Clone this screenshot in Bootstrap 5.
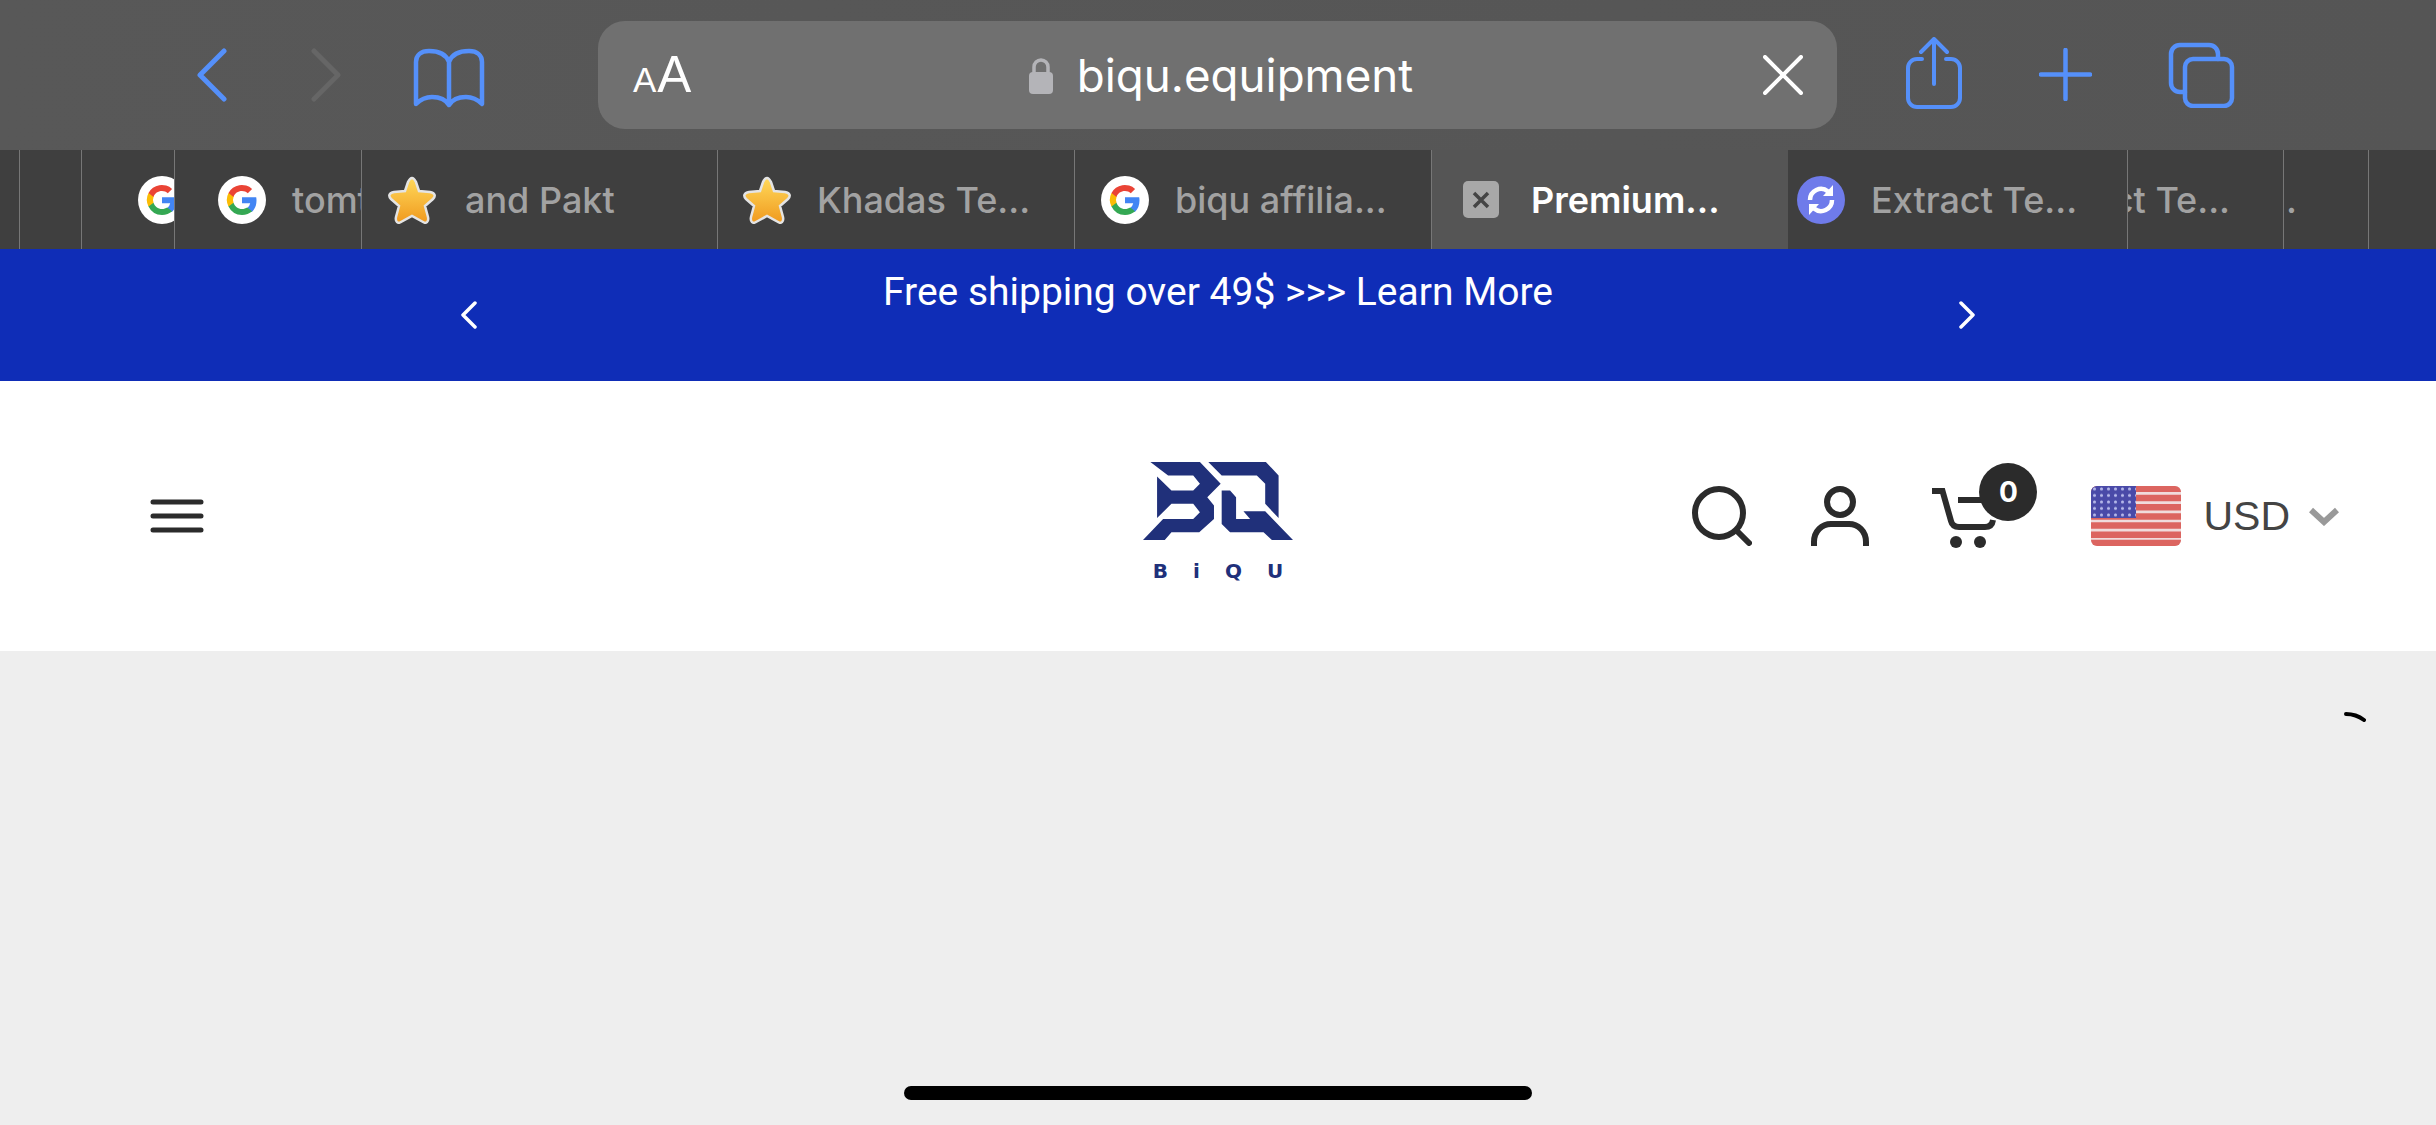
<!DOCTYPE html>
<html lang="en">
<head>
<meta charset="utf-8">
<title>biqu.equipment</title>
<link href="https://cdn.jsdelivr.net/npm/bootstrap@5.3.0/dist/css/bootstrap.min.css" rel="stylesheet">
<style>
body{margin:0;width:2436px;height:1125px;overflow:hidden;background:#eee;font-family:Inter,"Noto Sans",sans-serif;display:flex;flex-direction:column}
.toolbar{height:150px;background:linear-gradient(90deg,#585858,#555);flex:none}
.ico{display:block;flex:none;fill:none;stroke:#5590fa;stroke-linecap:round;stroke-linejoin:round}
.ico-off{stroke:#666;margin-left:84px}
.ico-book{margin-left:71px}
.ico-plus{margin:11px 0 0 77px}
.ico-tabs{margin:5px 0 0 76px}
.url-bar{margin:21px 0 0;width:1239px;height:108px;background:#707070;border-radius:27px;position:relative;color:#fff}
.toolbar-left{padding-top:46px;padding-left:196px;width:598px;flex:none}
.toolbar-left .ico{margin-top:2px}
.aa{font-family:"Liberation Sans",sans-serif;font-weight:400;line-height:1;width:100px;padding-left:35px;padding-top:28px;letter-spacing:1px}
.aa-s{font-size:35px}.aa-b{font-size:51px}
.url-mid{flex:1;justify-content:center;padding-right:19px;padding-top:32px;gap:24px}
.url-lock{margin-top:4px}
.url-text{font-size:45.700px;line-height:1;font-family:Inter,sans-serif;font-weight:400}
.url-x{margin-top:34px;margin-right:34px}
.toolbar-right{padding-left:69px;padding-top:37px}
.tab-strip{height:99px;background:#3f3f3f;flex:none}
.tb{height:99px;overflow:hidden;flex:none;border-right:1px solid #777;color:#a2a2a2;font-size:36px;font-weight:500;white-space:nowrap;align-items:center;font-family:Inter,sans-serif}
.tb-active{background:#555;color:#fff;border-right:0;font-weight:600;width:356px;padding-left:31px;gap:32px}
.tb-a{width:20px}
.tb-b{width:62px}
.tb-c{width:93px;padding-left:56px}
.tb-d{width:187px;padding-left:43px;gap:26px}
.tb-e{width:356px;padding-left:26px;gap:29px}
.tb-f{width:357px;padding-left:25px;gap:26px}
.tb-g{width:357px;padding-left:26px;gap:26px}
.tb-h{width:340px;padding-left:9px;gap:26px}
.tb-i{width:156px;padding-right:53px}
.tb-j{width:85px;padding-right:71px}
.tb-k{border-right:0}
.fav{flex:none;width:48px;height:48px;display:block}
.fav-x{width:36px;height:37px}
.promo{height:132px;background:#0f2db7;color:#fff;flex:none;font-family:Roboto,sans-serif;font-size:39px}
.promo-row{width:1515px}
.promo-text{line-height:1;padding-top:24px;text-align:center}
.promo-arrow{margin-top:52px}
.site-head{height:270px;background:#fff;flex:none;align-items:center;padding:0 97px}
.side{flex:1 1 0}
.burger{margin-left:53px}
.logo-col{padding-top:10px}
.word{font-family:"DejaVu Sans",sans-serif;font-weight:700;font-size:20px;color:#20307a;line-height:1;letter-spacing:25px;margin-top:21px;padding-left:25px;white-space:nowrap}
.dark{fill:none;stroke:#2b2b2b;stroke-width:6;stroke-linecap:round}
.butt{stroke-linecap:butt}
.usd{font-family:"Liberation Sans",sans-serif;font-size:41px;color:#444;line-height:1;margin-left:22px}
.cart-box{width:64px;height:60px;margin-left:61px}
.cart-box svg{overflow:visible}
.cart-badge{position:absolute;left:49px;top:-23px;width:58px;height:58px;border-radius:50%;background:#2b2b2b;color:#fff;font-size:28px;font-weight:700;font-family:Inter,sans-serif}
.user-ico{margin-left:59px}
.flag{margin-left:97px}
.caret{margin-left:19px}
.canvas{flex:1;position:relative;padding:61px 70px 0 0}
.home-line{position:absolute;left:904px;bottom:25px;width:628px;height:14px;border-radius:7px;background:#000}
</style>
</head>
<body>
<div class="toolbar d-flex">
  <div class="toolbar-left d-flex">
    <svg class="ico" width="31" height="54" viewBox="0 0 31 54" stroke-width="5"><path d="M28 3 4 27l24 24"/></svg>
    <svg class="ico ico-off" width="31" height="54" viewBox="0 0 31 54" stroke-width="5"><path d="M3 3l24 24L3 51"/></svg>
    <svg class="ico ico-book" width="72" height="60" viewBox="0 0 72 60" stroke-width="4.5"><path d="M36 14C33 6 26 3 16 3 8 3 3 7 3 14v42c5-5 10-7 16-7 8 0 14 3 17 8 3-5 9-8 17-8 6 0 11 2 16 7V14c0-7-5-11-13-11-10 0-17 3-20 11v43"/></svg>
  </div>
  <div class="url-bar d-flex">
    <div class="aa"><span class="aa-s">A</span><span class="aa-b">A</span></div>
    <div class="url-mid d-flex">
      <svg width="24" height="37" viewBox="0 0 24 37" class="d-block flex-none url-lock"><path d="M5 17V10a7 7 0 0 1 14 0v7" fill="none" stroke="#b4b4b8" stroke-width="3.5"/><rect y="15" width="24" height="22" rx="4" fill="#b4b4b8"/></svg>
      <span class="url-text">biqu.equipment</span>
    </div>
    <svg class="url-x d-block" width="40" height="40" viewBox="0 0 40 40" fill="none" stroke="#fff" stroke-width="4" stroke-linecap="round"><path d="M2 2l36 36M38 2 2 38"/></svg>
  </div>
  <div class="toolbar-right d-flex">
    <svg class="ico" width="56" height="72" viewBox="0 0 56 72" stroke-width="4"><path d="M16 22H11a9 9 0 0 0-9 9v30a9 9 0 0 0 9 9h34a9 9 0 0 0 9-9V31a9 9 0 0 0-9-9h-5M28 47V2M15 15 28 2l13 13"/></svg>
    <svg class="ico ico-plus" width="53" height="53" viewBox="0 0 53 53" stroke-width="4.5"><path d="M26.500 2v49M2 26.500h49"/></svg>
    <svg class="ico ico-tabs" width="67" height="66" viewBox="0 0 67 66" stroke-width="4.500"><path d="M50 17v-5a9 9 0 0 0-9-9H12a9 9 0 0 0-9 9v29a9 9 0 0 0 9 9h5"/><rect x="17" y="17" width="47" height="47" rx="8"/></svg>
  </div>
</div>

<div class="tab-strip d-flex">
  <div class="tb tb-a"></div>
  <div class="tb tb-b"></div>
  <div class="tb tb-c d-flex"><svg class="fav" viewBox="0 0 48 48"><use href="#g"/></svg></div>
  <div class="tb tb-d d-flex"><svg class="fav" viewBox="0 0 48 48"><use href="#g"/></svg><span>tomt</span></div>
  <div class="tb tb-e d-flex"><svg class="fav" viewBox="0 0 48 48"><use href="#star"/></svg><span>and Pakt</span></div>
  <div class="tb tb-f d-flex"><svg class="fav" viewBox="0 0 48 48"><use href="#star"/></svg><span>Khadas Te...</span></div>
  <div class="tb tb-g d-flex"><svg class="fav" viewBox="0 0 48 48"><use href="#g"/></svg><span>biqu affilia...</span></div>
  <div class="tb tb-active d-flex">
    <svg class="fav fav-x" viewBox="0 0 36 37"><rect width="36" height="37" rx="5" fill="#a8a8a8"/><path d="M11 12l14 14M25 12 11 26" stroke="#444" stroke-width="3.500"/></svg><span>Premium...</span></div>
  <div class="tb tb-h d-flex"><svg class="fav" viewBox="0 0 48 48"><use href="#sync"/></svg><span>Extract Te...</span></div>
  <div class="tb tb-i d-flex justify-content-end"><span>Extract Te...</span></div>
  <div class="tb tb-j d-flex justify-content-end"><span>Extract Te..</span></div>
  <div class="tb tb-k flex-grow-1"></div>
</div>

<div class="promo d-flex justify-content-center">
  <div class="d-flex justify-content-between promo-row">
    <svg class="d-block flex-none promo-arrow" width="16" height="28" viewBox="0 0 16 28" fill="none" stroke="#fff" stroke-width="3.500" stroke-linecap="round" stroke-linejoin="round"><path d="M14 2 2 14l12 12"/></svg>
    <div class="promo-text">Free shipping over 49$ &gt;&gt;&gt; Learn More</div>
    <svg class="d-block flex-none promo-arrow" width="16" height="28" viewBox="0 0 16 28" fill="none" stroke="#fff" stroke-width="3.500" stroke-linecap="round" stroke-linejoin="round"><path d="M2 2l12 12L2 26"/></svg>
  </div>
</div>

<div class="site-head d-flex">
  <div class="side">
    <svg class="d-block burger" width="54" height="34" viewBox="0 0 54 34" fill="none" stroke="#2b2b2b" stroke-width="5" stroke-linecap="round"><path d="M3 3h48M3 17h48M3 31h48"/></svg>
  </div>
  <div class="d-flex flex-column align-items-center flex-none logo-col">
    <svg class="d-block" width="150" height="78" viewBox="130 65 448 233" fill="#20307a">
      <path d="M152 65H300L362 130 322 170 342 195V235L298 275H215L195 298H130L190 235H280L300 215 280 190H215L172 232V108L215 150H280L300 130 280 105H205Z"/>
      <path d="M325 65H497L535 105V232L495 190V130L470 105H365Z"/>
      <path d="M365 150H390L408 170V235H450L430 212H495L578 298H515L490 275H390L365 250Z"/>
    </svg>
    <div class="word">BiQU</div>
  </div>
  <div class="side d-flex justify-content-end align-items-center">
    <svg class="d-block flex-none" width="60" height="60" viewBox="0 0 60 60"><circle class="dark" cx="27" cy="27" r="24"/><path class="dark" d="M45 45l12 12"/></svg>
    <svg class="d-block flex-none user-ico" width="58" height="60" viewBox="0 0 58 60"><circle class="dark" cx="29" cy="16" r="13"/><path class="dark butt" d="M3 60V56C3 45 11 38 20 38H38C47 38 55 45 55 56V60"/></svg>
    <div class="position-relative flex-none cart-box">
      <svg class="d-block" width="64" height="60" viewBox="0 0 64 60"><path class="dark butt" d="M2 5h10.500L21 35q1.500 6 8 6H55q7 0 8-7M28 14H56"/><circle cx="26" cy="56" r="6" fill="#2b2b2b"/><circle cx="50" cy="56" r="6" fill="#2b2b2b"/></svg>
      <span class="cart-badge d-flex align-items-center justify-content-center">0</span>
    </div>
    <svg class="d-block flex-none flag" width="90" height="60" viewBox="0 0 90 60">
      <defs><clipPath id="fl"><rect width="90" height="60" rx="6"/></clipPath><pattern id="dots" width="7" height="6.500" patternUnits="userSpaceOnUse"><circle cx="3.500" cy="3" r="1.500" fill="#b6b9ea"/></pattern></defs>
      <g clip-path="url(#fl)"><rect width="90" height="60" fill="#f0dcdc"/>
        <path d="M0 2.800h90M0 12h90M0 21.200h90M0 30.400h90M0 39.600h90M0 48.800h90M0 57h90" stroke="#dc6560" stroke-width="6.500"/>
        <rect width="45" height="32" fill="#4a4aa8"/><rect width="45" height="32" fill="url(#dots)"/></g>
    </svg>
    <span class="usd flex-none">USD</span>
    <svg class="d-block flex-none caret" width="30" height="19" viewBox="0 0 30 19" fill="none" stroke="#999" stroke-width="6"><path d="M2 3l13 12L28 3"/></svg>
  </div>
</div>

<div class="canvas d-flex justify-content-end">
  <svg class="d-block" width="22" height="10" viewBox="0 0 22 10" fill="none" stroke="#000" stroke-width="4" stroke-linecap="round"><path d="M2 2c6 0 12 1.500 18 6"/></svg>
  <div class="home-line"></div>
</div>

<svg width="0" height="0" class="position-absolute">
  <defs>
    <symbol id="g" viewBox="0 0 48 48"><circle cx="24" cy="24" r="24" fill="#fff"/>
      <path d="M38.500 24.500c0-1.100-.1-2.200-.3-3.200H24v6h8.200a7 7 0 0 1-3 4.600v3.800h4.900c2.800-2.600 4.400-6.500 4.400-11.200z" fill="#4285f4"/>
      <path d="M24 39c4.100 0 7.500-1.400 10.100-3.700l-4.900-3.800c-1.400.9-3.100 1.500-5.200 1.500-4 0-7.300-2.700-8.500-6.300h-5v3.900A15 15 0 0 0 24 39z" fill="#34a853"/>
      <path d="M15.500 26.700a9 9 0 0 1 0-5.800V17h-5a15 15 0 0 0 0 13.600z" fill="#fbbc05"/>
      <path d="M24 15c2.200 0 4.200.8 5.800 2.300l4.300-4.300A15 15 0 0 0 10.500 17l5 3.900c1.200-3.600 4.500-5.900 8.500-5.900z" fill="#ea4335"/></symbol>
    <symbol id="star" viewBox="0 0 48 48"><defs><linearGradient id="sg" x1="0" y1="0" x2="0" y2="1"><stop offset="0" stop-color="#ffd95a"/><stop offset="1" stop-color="#f09a1f"/></linearGradient></defs>
      <path d="M24 2c2 0 3 2 4 4l3 9 11 1c5 1 6 4 3 7l-8 7 3 11c1 5-2 7-5 5l-11-6-11 6c-3 2-6 0-5-5l3-11-8-7c-3-3-2-6 3-7l11-1 3-9c1-2 2-4 4-4z" fill="url(#sg)" stroke="#e4e4e4" stroke-width="2.500"/></symbol>
    <symbol id="sync" viewBox="0 0 48 48"><circle cx="24" cy="24" r="24" fill="#6f7bea"/>
      <path d="M13 24a11 11 0 0 1 18-8.500M35 24a11 11 0 0 1-18 8.500" fill="none" stroke="#fff" stroke-width="4.500"/><path d="M36 9v11H26zM12 39V28h10z" fill="#fff"/></symbol>
  </defs>
</svg>
<script src="https://cdn.jsdelivr.net/npm/bootstrap@5.3.0/dist/js/bootstrap.bundle.min.js"></script>
</body>
</html>
